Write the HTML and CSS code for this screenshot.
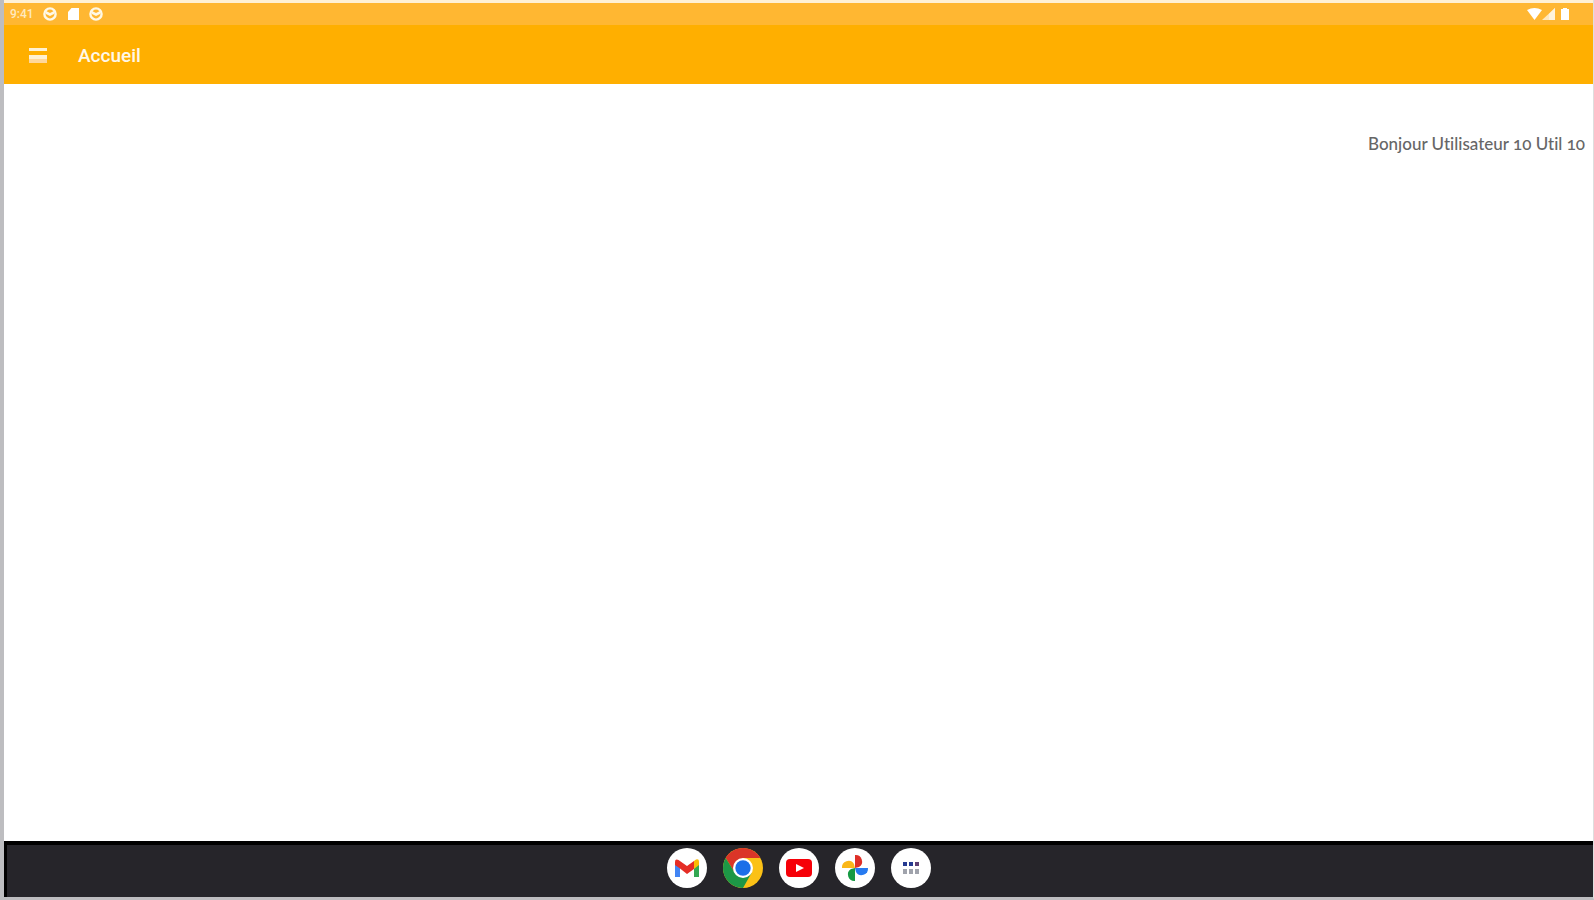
FILE: index.html
```html
<!DOCTYPE html>
<html lang="fr">
<head>
<meta charset="utf-8">
<meta name="viewport" content="width=device-width, initial-scale=1">
<title>Accueil</title>
<link rel="stylesheet" href="styles.css">
</head>
<body>
<div class="screen">
  <div class="status-bar">
    <div class="status-group">
      <span class="clock">9:41</span>
      <svg class="notice" viewBox="0 0 14 14" aria-hidden="true"><circle cx="7" cy="7" r="5.6" fill="none" stroke="#fff8e6" stroke-width="2.4"/><path d="M3 4l4 2 4-2v3L7 9 3 7z" fill="#fff8e6"/></svg>
      <svg class="notice" viewBox="0 0 14 14" aria-hidden="true"><path d="M5.5 1H13v12H2V5z" fill="#fff"/></svg>
      <svg class="notice" viewBox="0 0 14 14" aria-hidden="true"><circle cx="7" cy="7" r="5.6" fill="none" stroke="#fff8e6" stroke-width="2.4"/><path d="M3 4l4 2 4-2v3L7 9 3 7z" fill="#fff8e6"/></svg>
    </div>
    <svg class="signals" viewBox="0 0 44 14" aria-hidden="true"><path d="M0 3Q7.5-1 15 3L7.5 13z" fill="#fff"/><path d="M15 13L28 1v12z" fill="#ffe8bd"/><path d="M22 7l6-6v12h-6z" fill="#fff3dc"/><path d="M36 1h4v1h2v11h-8V2h2z" fill="#fff"/></svg>
  </div>
  <header class="app-bar">
    <button class="menu-button" type="button" aria-label="Menu"><svg viewBox="0 0 20 18" aria-hidden="true"><path d="M1 1h18v3H1z" fill="#fff1d1"/><path d="M1 8h18v4H1z" fill="#fff1d1"/><path d="M1 12h18v4H1z" fill="#ffd79a"/></svg></button>
    <h1 class="title">Accueil</h1>
  </header>
  <main class="content"><p class="greeting">Bonjour Utilisateur 10 Util 10</p></main>
  <nav class="dock" aria-label="Applications">
    <button class="app" type="button" aria-label="Gmail"><svg viewBox="0 0 40 40"><circle cx="20" cy="20" r="20" fill="#fff"/><path d="M8 15l5 3.500V29H8z" fill="#4285f4"/><path d="M27 18.500l5-3.500v14h-5z" fill="#34a853"/><path d="M27 13l2-1.500q3-1 3 2V17l-5 4z" fill="#fbbc04"/><path d="M8 17v-3q0-3.500 3.500-2l8.500 6 7-5v8l-7 5-7-5.500z" fill="#e52d25"/></svg></button>
    <button class="app" type="button" aria-label="Chrome"><svg viewBox="0 0 40 40"><circle cx="20" cy="20" r="20" fill="#fbc116"/><path d="M2.700 10A20 20 0 0 1 37.300 10H20L12 25z" fill="#db3528"/><path d="M2.700 10A20 20 0 0 0 20 40L28.500 25H12z" fill="#1d9746"/><circle cx="20" cy="20" r="10" fill="#fff"/><circle cx="20" cy="20" r="7.700" fill="#1b6fe8"/></svg></button>
    <button class="app" type="button" aria-label="YouTube"><svg viewBox="0 0 40 40"><circle cx="20" cy="20" r="20" fill="#fff"/><rect x="7" y="11" width="26" height="18" rx="4" fill="#f60008"/><path d="M17 16l8 4-8 4z" fill="#fff"/></svg></button>
    <button class="app" type="button" aria-label="Photos"><svg viewBox="0 0 40 40"><circle cx="20" cy="20" r="20" fill="#fff"/><path d="M20 7a6.500 6.500 0 0 1 4 12l-4 1z" fill="#df2f27"/><path d="M20 20h13a6.500 6.500 0 0 1-12 4z" fill="#267af0"/><path d="M20 20v13a6.500 6.500 0 0 1-4-12z" fill="#179a43"/><path d="M20 20H7a6.500 6.500 0 0 1 12-4z" fill="#fab719"/></svg></button>
    <button class="app" type="button" aria-label="Toutes les applications"><svg viewBox="0 0 40 40"><circle cx="20" cy="20" r="20" fill="#fff"/><path d="M12 14h4v4h-4zM18 14h4v4h-4z" fill="#253a91"/><path d="M24 14h4v4h-4z" fill="#604073"/><path d="M12 21h4v5h-4zM18 21h4v5h-4zM24 21h4v5h-4z" fill="#a0a3ac"/></svg></button>
  </nav>
</div>
</body>
</html>
```
FILE: styles.css
```css
* { box-sizing: border-box; }

body {
  margin: 0;
  background: #fff;
  font-family: Roboto, "Liberation Sans", sans-serif;
}

button {
  padding: 0;
  border: 0;
  background: none;
}

svg { display: block; }

.screen {
  display: flex;
  flex-direction: column;
  min-height: 100vh;
  border: solid #bdbdc0;
  border-width: 0 1px 3px 4px;
  border-right-color: #dedede;
}

.status-bar {
  display: flex;
  align-items: center;
  justify-content: space-between;
  height: 25px;
  padding: 0 22px 1px 6px;
  border-top: 3px solid #fff1d6;
  background: #ffb732;
}

.status-group {
  display: flex;
  align-items: center;
  gap: 9px;
}

.clock {
  width: 24px;
  color: #ffe9bf;
  font-size: 12px;
  font-weight: 500;
  line-height: 16px;
}

.notice {
  width: 14px;
  height: 14px;
}

.signals {
  width: 44px;
  height: 14px;
}

.app-bar {
  display: flex;
  align-items: center;
  gap: 30px;
  height: 59px;
  padding: 2px 0 0 24px;
  background: #ffaf00;
}

.menu-button svg {
  width: 20px;
  height: 18px;
}

.title {
  margin: 0;
  color: #fff8e8;
  font-size: 19px;
  font-weight: 500;
  line-height: 24px;
}

.content {
  flex: 1;
  padding: 48px 8px 0;
}

.greeting {
  margin: 0;
  color: #666;
  font-family: Lato, "Open Sans", sans-serif;
  font-size: 17px;
  font-weight: 500;
  font-variant-ligatures: none;
  font-variant-numeric: oldstyle-nums;
  line-height: 24px;
  text-align: right;
}

.dock {
  display: flex;
  align-items: center;
  justify-content: center;
  gap: 16px;
  height: 56px;
  padding-bottom: 2px;
  background: #26252a;
  box-shadow: inset 3px 4px #000;
}

.app svg {
  width: 40px;
  height: 40px;
}
```
